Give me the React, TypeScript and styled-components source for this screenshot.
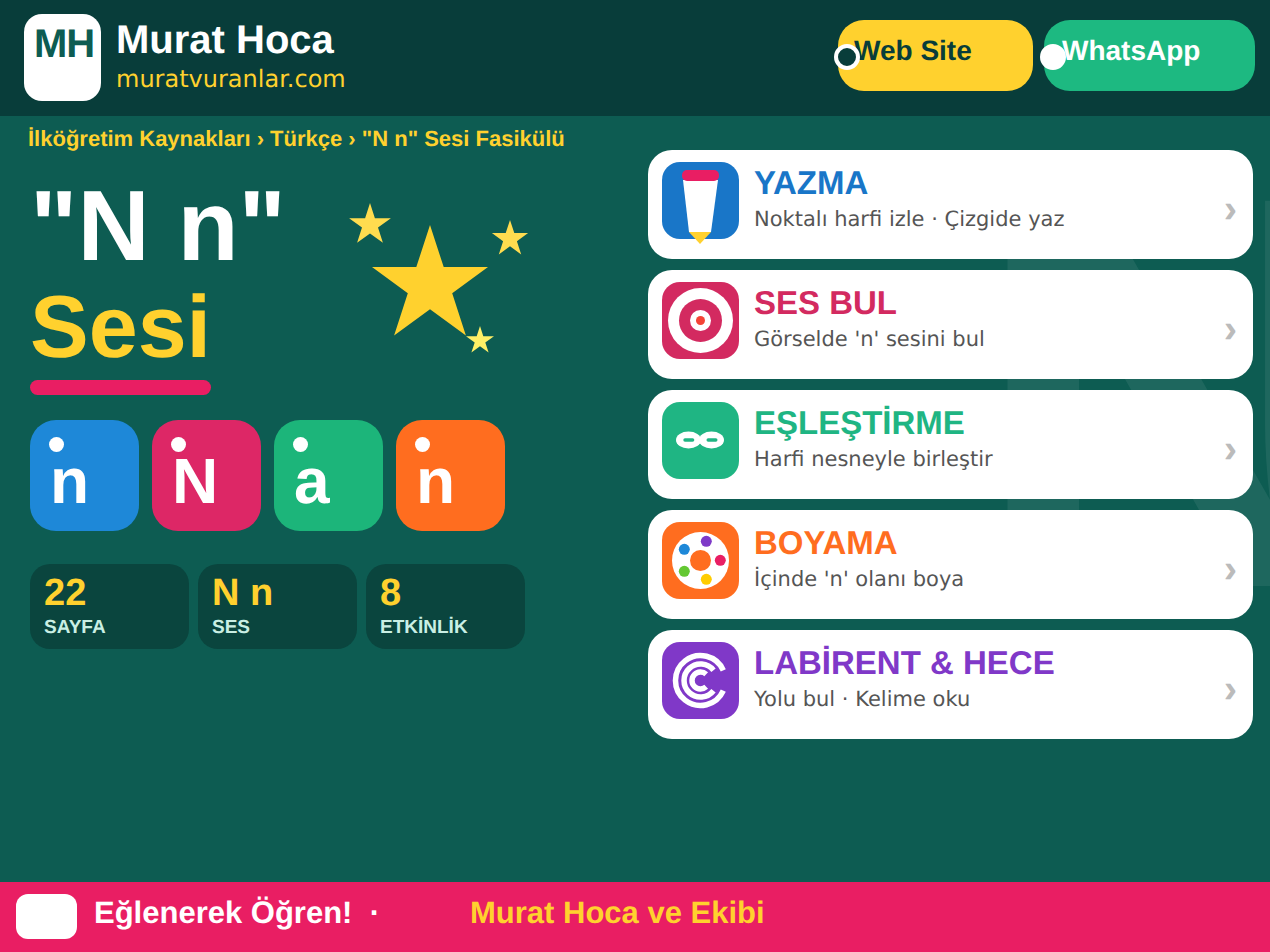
import React from 'react'
import styled, { createGlobalStyle } from 'styled-components'

const GlobalStyle = createGlobalStyle`
  html, body {
    margin: 0;
    padding: 0;
    height: 100%;
    overflow: hidden;
    background: #0d5c52;
    text-rendering: geometricPrecision;
  }
  * {
    box-sizing: border-box;
  }
  #root {
    height: 100%;
  }
`

const Page = styled.div`
  position: relative;
  width: 1270px;
  height: 952px;
  display: flex;
  flex-direction: column;
  overflow: hidden;
  background: #0d5c52;
  font-family: 'Liberation Sans', Arial, sans-serif;
`

const Header = styled.header`
  height: 116px;
  flex-shrink: 0;
  display: flex;
  align-items: flex-start;
  padding: 14px 15px 0 24px;
  background: #083d3a;
  position: relative;
  z-index: 1;
`

const Logo = styled.div`
  width: 77px;
  height: 87px;
  padding-left: 3px;
  border-radius: 18px;
  background: #fff;
  color: #0d5c52;
  font-size: 40px;
  letter-spacing: -1px;
  line-height: 60px;
  font-weight: 700;
  text-align: center;
  flex-shrink: 0;
`

const Brand = styled.div`
  margin-left: 15px;
  padding-top: 1px;
  flex: 1;
`

const BrandName = styled.div`
  font-size: 40px;
  line-height: 50px;
  font-weight: 700;
  color: #fff;
`

const BrandSite = styled.div`
  font-family: 'DejaVu Sans', sans-serif;
  font-size: 24px;
  line-height: 29px;
  color: #ffd12e;
`

const HeaderButtons = styled.nav`
  display: flex;
  gap: 11px;
  margin-top: 6px;
`

const HeaderButton = styled.a<{ $bg: string; $fg: string; $width: number; $pad: number }>`
  position: relative;
  display: block;
  width: ${(p) => p.$width}px;
  height: 71px;
  padding: 14px 0 0 ${(p) => p.$pad}px;
  border-radius: 26px;
  background: ${(p) => p.$bg};
  color: ${(p) => p.$fg};
  font-size: 28px;
  line-height: 34px;
  font-weight: 700;
`

const ButtonDot = styled.span<{ $fill: string }>`
  position: absolute;
  left: -4px;
  top: 24px;
  width: 26px;
  height: 26px;
  border-radius: 50%;
  border: 4px solid #fff;
  background: ${(p) => p.$fill};
`

const BackdropLetter = styled.div`
  position: absolute;
  left: 970px;
  top: 72px;
  font-size: 560px;
  line-height: 640px;
  font-weight: 700;
  color: rgba(255, 255, 255, 0.07);
  pointer-events: none;
`

const Main = styled.main`
  position: relative;
  flex: 1;
  display: grid;
  grid-template-columns: 648px 605px;
  align-items: start;
`

const LeftColumn = styled.section`
  padding: 9px 0 0 30px;
`

const Crumbs = styled.div`
  margin-left: -2px;
  font-size: 22px;
  line-height: 28px;
  font-weight: 700;
  color: #ffd12e;
`

const Hero = styled.div`
  display: flex;
  align-items: flex-start;
`

const HeroText = styled.div`
  width: 300px;
`

const HeroLine = styled.div`
  margin-top: 17px;
  font-size: 100px;
  line-height: 112px;
  font-weight: 700;
  color: #fff;
`

const HeroAccent = styled.div`
  margin-top: -5px;
  font-size: 88px;
  line-height: 100px;
  font-weight: 700;
  color: #ffd12e;
`

const HeroBar = styled.div`
  width: 181px;
  height: 15px;
  margin-top: 3px;
  border-radius: 8px;
  background: #e91e63;
`

const Stars = styled.svg`
  width: 200px;
  height: 170px;
  margin-top: 37px;
  margin-left: 10px;
  flex-shrink: 0;
`

const Tiles = styled.div`
  display: flex;
  gap: 13px;
  margin-top: 25px;
`

const Tile = styled.div<{ $bg: string }>`
  position: relative;
  width: 109px;
  height: 111px;
  padding: 24px 0 0 20px;
  border-radius: 26px;
  background: ${(p) => p.$bg};
  color: #fff;
  font-size: 64px;
  line-height: 74px;
  font-weight: 700;
`

const TileDot = styled.span`
  position: absolute;
  left: 19px;
  top: 17px;
  width: 15px;
  height: 15px;
  border-radius: 50%;
  background: #fff;
`

const Stats = styled.div`
  display: flex;
  gap: 9px;
  margin-top: 33px;
`

const Stat = styled.div`
  width: 159px;
  height: 85px;
  padding: 8px 14px 0;
  border-radius: 20px;
  background: #0a453e;
`

const StatValue = styled.div`
  font-size: 38px;
  line-height: 42px;
  font-weight: 700;
  color: #ffd12e;
`

const StatLabel = styled.div`
  margin-top: 2px;
  font-size: 19px;
  line-height: 24px;
  font-weight: 700;
  color: #c9efe4;
`

const Cards = styled.section`
  display: flex;
  flex-direction: column;
  gap: 11px;
  padding-top: 34px;
`

const Card = styled.a`
  position: relative;
  height: 109px;
  display: flex;
  gap: 15px;
  padding: 12px 14px;
  border-radius: 24px;
  background: #fff;
`

const CardIcon = styled.svg`
  width: 77px;
  height: 77px;
  flex-shrink: 0;
  overflow: visible;
`

const CardTitle = styled.div<{ $color: string }>`
  font-size: 33px;
  line-height: 42px;
  font-weight: 700;
  color: ${(p) => p.$color};
`

const CardSub = styled.div`
  font-family: 'DejaVu Sans', sans-serif;
  font-size: 21px;
  line-height: 30px;
  color: #555;
`

const Chevron = styled.span`
  position: absolute;
  right: 16px;
  top: 36px;
  font-size: 40px;
  line-height: 46px;
  font-weight: 700;
  color: #bbb;
`

const Footer = styled.footer`
  position: relative;
  height: 70px;
  flex-shrink: 0;
  display: flex;
  align-items: flex-start;
  padding: 12px 0 0 16px;
  background: #e91e63;
  font-size: 31px;
  line-height: 37px;
  font-weight: 700;
`

const FooterBadge = styled.div`
  width: 61px;
  height: 45px;
  border-radius: 12px;
  background: #fff;
`

const Slogan = styled.span`
  margin-left: 17px;
  width: 376px;
  color: #fff;
`

const Credit = styled.span`
  color: #ffd12e;
`

const star = (cx: number, cy: number, r: number) => {
  const pts: string[] = []
  for (let i = 0; i < 10; i++) {
    const rad = i % 2 === 0 ? r : r * 0.382
    const a = (-90 + i * 36) * (Math.PI / 180)
    pts.push(`${(cx + rad * Math.cos(a)).toFixed(1)},${(cy + rad * Math.sin(a)).toFixed(1)}`)
  }
  return pts.join(' ')
}

const PencilIcon = () => (
  <CardIcon viewBox="0 0 77 77">
    <rect width="77" height="77" rx="18" fill="#1976c8" />
    <polygon points="21,18 56,18 49,70 27,70" fill="#fff" />
    <rect x="20" y="8" width="37" height="11" rx="5" fill="#e91e63" />
    <polygon points="27,70 49,70 38,82" fill="#ffd12e" />
  </CardIcon>
)

const TargetIcon = () => (
  <CardIcon viewBox="0 0 77 77">
    <rect width="77" height="77" rx="18" fill="#d32a60" />
    <circle cx="38.5" cy="38.5" r="32.5" fill="#fff" />
    <circle cx="38.5" cy="38.5" r="21.5" fill="#d32a60" />
    <circle cx="38.5" cy="38.5" r="10.5" fill="#fff" />
    <circle cx="38.5" cy="38.5" r="4.5" fill="#f44336" />
  </CardIcon>
)

const LinkIcon = () => (
  <CardIcon viewBox="0 0 77 77">
    <rect width="77" height="77" rx="18" fill="#1fb583" />
    <ellipse cx="26.5" cy="38" rx="12.5" ry="8.5" fill="#fff" />
    <ellipse cx="49.5" cy="38" rx="12.5" ry="8.5" fill="#fff" />
    <rect x="21.3" y="36.3" width="11" height="3.4" rx="1.7" fill="#1fb583" />
    <rect x="44.5" y="36.3" width="11" height="3.4" rx="1.7" fill="#1fb583" />
  </CardIcon>
)

const paletteDots: [number, number, string][] = [
  [22.3, 27.3, '#1e88d8'],
  [44.3, 19.3, '#7e3ac8'],
  [58.3, 38.3, '#e91e63'],
  [44.3, 57.3, '#ffcc00'],
  [22.3, 49.3, '#64c832'],
]

const PaletteIcon = () => (
  <CardIcon viewBox="0 0 77 77">
    <rect width="77" height="77" rx="18" fill="#ff6d1f" />
    <circle cx="38.5" cy="38.5" r="28.5" fill="#fff" />
    <circle cx="38.5" cy="38.5" r="10.5" fill="#ff6d1f" />
    {paletteDots.map(([cx, cy, fill]) => (
      <circle key={fill} cx={cx} cy={cy} r="5.5" fill={fill} />
    ))}
  </CardIcon>
)

// open C shape around the icon centre, opening to the right
const arc = (r: number, deg: number) => {
  const a = (deg * Math.PI) / 180
  const x = (38.5 + r * Math.cos(a)).toFixed(1)
  const top = (38.5 - r * Math.sin(a)).toFixed(1)
  const bottom = (38.5 + r * Math.sin(a)).toFixed(1)
  return `M${x} ${top} A${r} ${r} 0 1 0 ${x} ${bottom}`
}

const MazeIcon = () => (
  <CardIcon viewBox="0 0 77 77">
    <rect width="77" height="77" rx="18" fill="#8038c8" />
    <g fill="none" stroke="#fff" strokeWidth="5.5">
      <path d={arc(25, 24)} />
      <path d={arc(16.5, 38)} />
      <path d={arc(8.5, 48)} />
    </g>
  </CardIcon>
)

const cards = [
  { title: 'YAZMA', sub: 'Noktalı harfi izle · Çizgide yaz', color: '#1976c8', icon: <PencilIcon /> },
  { title: 'SES BUL', sub: "Görselde 'n' sesini bul", color: '#d32a60', icon: <TargetIcon /> },
  { title: 'EŞLEŞTİRME', sub: 'Harfi nesneyle birleştir', color: '#1fb583', icon: <LinkIcon /> },
  { title: 'BOYAMA', sub: "İçinde 'n' olanı boya", color: '#ff6d1f', icon: <PaletteIcon /> },
  { title: 'LABİRENT & HECE', sub: 'Yolu bul · Kelime oku', color: '#8038c8', icon: <MazeIcon /> },
]

const tiles = [
  { letter: 'n', bg: '#1e88d8' },
  { letter: 'N', bg: '#dd2766' },
  { letter: 'a', bg: '#1cb57a' },
  { letter: 'n', bg: '#ff6d1f' },
]

const stats = [
  { value: '22', label: 'SAYFA' },
  { value: 'N n', label: 'SES' },
  { value: '8', label: 'ETKİNLİK' },
]

const App = () => {
  return (
    <Page>
      <GlobalStyle />
      <BackdropLetter>N</BackdropLetter>
      <Header>
        <Logo>MH</Logo>
        <Brand>
          <BrandName>Murat Hoca</BrandName>
          <BrandSite>muratvuranlar.com</BrandSite>
        </Brand>
        <HeaderButtons>
          <HeaderButton $bg="#ffd12e" $fg="#083d3a" $width={195} $pad={16}>
            <ButtonDot $fill="#083d3a" />
            Web Site
          </HeaderButton>
          <HeaderButton $bg="#1db981" $fg="#fff" $width={211} $pad={18}>
            <ButtonDot $fill="#fff" />
            WhatsApp
          </HeaderButton>
        </HeaderButtons>
      </Header>
      <Main>
        <LeftColumn>
          <Crumbs>İlköğretim Kaynakları › Türkçe › "N n" Sesi Fasikülü</Crumbs>
          <Hero>
            <HeroText>
              <HeroLine>"N n"</HeroLine>
              <HeroAccent>Sesi</HeroAccent>
              <HeroBar />
            </HeroText>
            <Stars viewBox="0 0 200 170">
              <polygon points={star(90, 96, 61)} fill="#ffd12e" />
              <polygon points={star(30, 35, 22)} fill="#ffdc4f" />
              <polygon points={star(170, 49, 19)} fill="#ffdc4f" />
              <polygon points={star(140, 150.7, 14.7)} fill="#fff066" />
            </Stars>
          </Hero>
          <Tiles>
            {tiles.map((t, i) => (
              <Tile key={i} $bg={t.bg}>
                <TileDot />
                {t.letter}
              </Tile>
            ))}
          </Tiles>
          <Stats>
            {stats.map((s) => (
              <Stat key={s.label}>
                <StatValue>{s.value}</StatValue>
                <StatLabel>{s.label}</StatLabel>
              </Stat>
            ))}
          </Stats>
        </LeftColumn>
        <Cards>
          {cards.map((c) => (
            <Card key={c.title}>
              {c.icon}
              <div>
                <CardTitle $color={c.color}>{c.title}</CardTitle>
                <CardSub>{c.sub}</CardSub>
              </div>
              <Chevron>›</Chevron>
            </Card>
          ))}
        </Cards>
      </Main>
      <Footer>
        <FooterBadge />
        <Slogan>Eğlenerek Öğren! &nbsp;·</Slogan>
        <Credit>Murat Hoca ve Ekibi</Credit>
      </Footer>
    </Page>
  )
}

export default App
